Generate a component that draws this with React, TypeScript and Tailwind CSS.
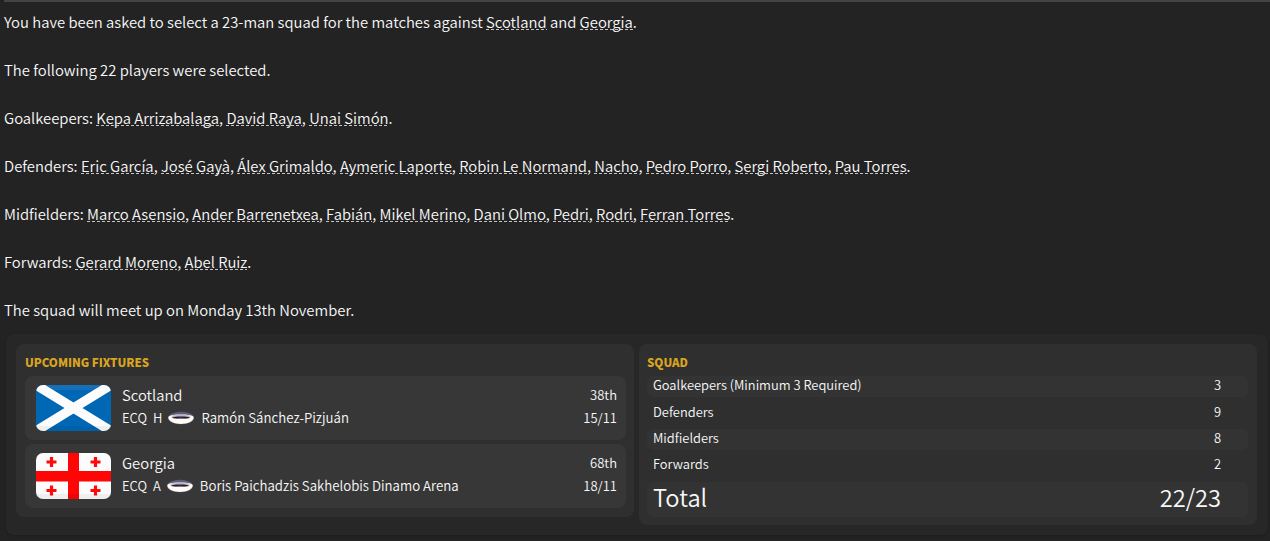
import { Fragment, ReactNode } from "react";

type Fixture = {
  team: string;
  venue: string;
  stadium: string;
  rank: string;
  date: string;
  flag: ReactNode;
};

const groups = [
  { name: "Goalkeepers", players: ["Kepa Arrizabalaga", "David Raya", "Unai Simón"] },
  {
    name: "Defenders",
    players: ["Eric García", "José Gayà", "Álex Grimaldo", "Aymeric Laporte", "Robin Le Normand", "Nacho", "Pedro Porro", "Sergi Roberto", "Pau Torres"],
  },
  {
    name: "Midfielders",
    players: ["Marco Asensio", "Ander Barrenetxea", "Fabián", "Mikel Merino", "Dani Olmo", "Pedri", "Rodri", "Ferran Torres"],
  },
  { name: "Forwards", players: ["Gerard Moreno", "Abel Ruiz"] },
];

const fixtures: Fixture[] = [
  { team: "Scotland", venue: "H", stadium: "Ramón Sánchez-Pizjuán", rank: "38th", date: "15/11", flag: <ScotlandFlag /> },
  { team: "Georgia", venue: "A", stadium: "Boris Paichadzis Sakhelobis Dinamo Arena", rank: "68th", date: "18/11", flag: <GeorgiaFlag /> },
];

function ScotlandFlag() {
  return (
    <svg width="75" height="46" viewBox="0 0 75 46" className="block rounded-[7px]">
      <rect width="75" height="46" fill="#0067b5" />
      <rect width="75" height="5" fill="#1470b8" />
      <path d="M0 0L75 46M75 0L0 46" stroke="#fcfcfc" strokeWidth="9.500" />
      <rect y="41" width="75" height="5" fill="#000" opacity="0.05" />
    </svg>
  );
}

function GeorgiaFlag() {
  return (
    <svg width="75" height="46" viewBox="0 0 75 46" className="block rounded-[7px]">
      <rect width="75" height="46" fill="#fcfcfc" />
      <path d="M32 0h11v46h-11zM0 18h75v10.500h-75z" fill="#ff0505" />
      <path d="M15.500 4v10M10.500 9h10M59.500 4v10M54.500 9h10M15.500 32.500v10M10.500 37.500h10M59.500 32.500v10M54.500 37.500h10" stroke="#ff0a0a" strokeWidth="3.200" />
      <rect y="41" width="75" height="5" fill="#000" opacity="0.05" />
    </svg>
  );
}

function StadiumIcon() {
  return (
    <svg width="28" height="14" viewBox="0 0 28 14" className="block">
      <ellipse cx="14" cy="7" rx="13" ry="6.300" fill="#5f5d7c" />
      <path d="M1.300 6C3 4.200 8 3.600 14 3.600S25 4.200 26.700 6C27 10.800 20 12.900 14 12.900S1 10.800 1.300 6z" fill="#fffaf4" />
      <ellipse cx="14" cy="5.300" rx="9.500" ry="1.500" fill="#b9b7c6" />
      <path d="M4.500 6.800C8 5 20 5 23.500 6.800C20 8.300 8 8.300 4.500 6.800z" fill="#1c1c28" />
      <ellipse cx="14" cy="7.400" rx="4.500" ry="0.700" fill="#77758c" />
    </svg>
  );
}

function Link({ children }: { children: ReactNode }) {
  return (
    <span className="bg-[repeating-linear-gradient(90deg,#c4c4c4_0_3px,transparent_3px_5px)] bg-[length:100%_1px] bg-[position:0_18px] bg-no-repeat">
      {children}
    </span>
  );
}

function FixtureCard({ team, venue, stadium, rank, date, flag }: Fixture) {
  return (
    <div className="flex h-16 rounded-lg bg-[#373737] pt-[9px] pr-[9px] pl-[11px]">
      {flag}
      <div className="-mt-px ml-[11px] flex-1">
        <div className="flex h-[22px] items-center justify-between">
          <span className="text-[14.800px]">{team}</span>
          <span className="text-[13px]">{rank}</span>
        </div>
        <div className="flex h-6 items-center text-[13px]">
          <span>ECQ</span>
          <span className="mr-[5px] ml-1.5">{venue}</span>
          <StadiumIcon />
          <span className="ml-1.5 text-[13.260px]">{stadium}</span>
          <span className="ml-auto">{date}</span>
        </div>
      </div>
    </div>
  );
}

function PanelTitle({ children }: { children: ReactNode }) {
  return <h2 className="h-8 pt-2 text-[11.500px] leading-5 font-black text-[#d9a520]">{children}</h2>;
}

function SquadRow({ label, count, className }: { label: string; count: string; className: string }) {
  return (
    <div className={`flex items-center justify-between rounded-md pr-[27px] pb-[3px] pl-1.5 ${className}`}>
      <span>{label}</span>
      <span>{count}</span>
    </div>
  );
}

export default function App() {
  return (
    <div className="h-[541px] overflow-hidden bg-[#232323] font-['Noto_Sans_CJK_SC',sans-serif] font-[350] text-[#f8f8f8]">
      <div className="ml-1 h-0.5 bg-[#444444]" />
      <div className="flex h-[332px] flex-col gap-6 pt-2 pl-1 text-[14.830px] leading-6 whitespace-nowrap">
        <p>
          You have been asked to select a 23-man squad for the matches against <Link>Scotland</Link> and <Link>Georgia</Link>.
        </p>
        <p>The following 22 players were selected.</p>
        {groups.map((group) => (
          <p key={group.name}>
            {group.name}:{" "}
            {group.players.map((player, i) => (
              <Fragment key={player}>
                {i > 0 && ", "}
                <Link>{player}</Link>
              </Fragment>
            ))}
            .
          </p>
        ))}
        <p>The squad will meet up on Monday 13th November.</p>
      </div>

      <div className="mr-0.5 ml-[6px] flex h-[201px] items-start gap-[5px] rounded-lg bg-[#272727] px-2.5 pt-2.5 shadow-sm">
        <section className="h-[173px] w-[618px] rounded-lg bg-[#2f2f2f] pr-2 pl-[9px]">
          <PanelTitle>UPCOMING FIXTURES</PanelTitle>
          <div className="flex flex-col gap-1">
            {fixtures.map((fixture) => (
              <FixtureCard key={fixture.team} {...fixture} />
            ))}
          </div>
        </section>
        <section className="h-[181px] w-[618px] rounded-lg bg-[#2f2f2f] pr-[9px] pl-2 text-[12.900px]">
          <PanelTitle>SQUAD</PanelTitle>
          <SquadRow label="Goalkeepers (Minimum 3 Required)" count="3" className="mb-1.5 h-[21px] bg-[#333333]" />
          <SquadRow label="Defenders" count="9" className="mb-[5px] h-[21px]" />
          <SquadRow label="Midfielders" count="8" className="mb-[5px] h-[21px] bg-[#333333]" />
          <SquadRow label="Forwards" count="2" className="mb-1.5 h-[21px]" />
          <SquadRow label="Total" count="22/23" className="h-[35px] bg-[#333333] text-[23.700px]" />
        </section>
      </div>
    </div>
  );
}
